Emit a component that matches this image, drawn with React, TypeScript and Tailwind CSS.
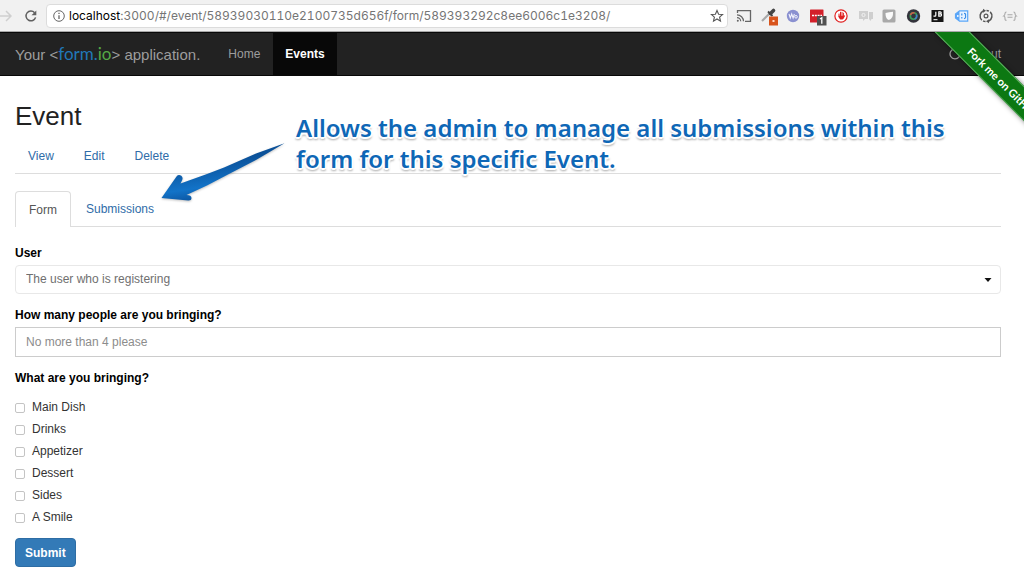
import { useState } from "react";
import type { ReactNode } from "react";

const URL_PATH = ":3000/#/event/58939030110e2100735d656f/form/589393292c8ee6006c1e3208/";

const DISHES = ["Main Dish", "Drinks", "Appetizer", "Dessert", "Sides", "A Smile"];

function ToolButton({ label, children }: { label: string; children: ReactNode }) {
  return (
    <button type="button" aria-label={label} className="flex h-5 w-4 items-center justify-center">
      <svg viewBox="0 0 16 16" className="h-4 w-4 overflow-visible" fill="none">
        {children}
      </svg>
    </button>
  );
}

function BrowserBar() {
  return (
    <div className="flex h-8 items-center border-b border-[#a8a8a8] bg-[#f1f1f1] pr-[6px]">
      <button type="button" aria-label="Forward" className="w-3">
        <svg viewBox="0 0 12 16" className="h-4 w-3" fill="none" stroke="#cfcfcf" strokeWidth="1.5">
          <path d="M0 8h11M6 3l5 5-5 5" />
        </svg>
      </button>
      <button type="button" aria-label="Reload" className="ml-3 w-[14px]">
        <svg viewBox="0 0 14 14" className="h-[14px] w-[14px]" fill="none" stroke="#606060" strokeWidth="1.5">
          <path d="M11.6 8.4A4.900 4.900 0 1 1 10.600 3.700" />
          <path d="M12.3 1.400v4.800H7.500z" fill="#606060" stroke="none" />
        </svg>
      </button>
      <div className="ml-2 flex h-6 flex-1 items-center rounded border border-[#dcdcdc] bg-white pl-[6px] pr-1">
        <svg viewBox="0 0 12 12" className="mr-1 h-3 w-3 shrink-0" fill="none" stroke="#666">
          <circle cx="6" cy="6" r="5.3" />
          <path d="M6 5.2V9M6 2.8v1.3" strokeWidth="1.3" />
        </svg>
        <div className="flex-1 font-['Inter',sans-serif] text-[12px] leading-4 whitespace-nowrap text-[#757575] tabular-nums">
          <span className="text-black">localhost</span>
          {URL_PATH}
        </div>
        <button type="button" aria-label="Bookmark" className="h-3 w-3">
          <svg viewBox="0 0 12 12" className="h-3 w-3 overflow-visible" fill="none" stroke="#555" strokeWidth="1.100">
            <path d="M6 0.500l1.600 3.700 4 .3-3 2.700.9 3.900L6 9 2.500 11.100l.9-3.900-3-2.700 4-.3z" />
          </svg>
        </button>
      </div>
      <div className="ml-[10px] flex gap-[8px]">
        <ToolButton label="Cast">
          <g transform="translate(-2 0)">
            <path d="M1.500 5V2.700h13v10.600H9" stroke="#666" strokeWidth="1.300" />
            <path d="M1 6.800a6.500 6.500 0 0 1 6.500 6.500M1 9.600a3.700 3.700 0 0 1 3.700 3.700" stroke="#666" strokeWidth="1.200" />
            <circle cx="1.800" cy="12.800" r="1" fill="#666" />
          </g>
        </ToolButton>
        <ToolButton label="Color picker">
          <path d="M0 13l7.500-7.500" stroke="#a8a8a8" strokeWidth="2.200" />
          <path d="M6 3.500l4.500 4.500" stroke="#444" strokeWidth="1.800" />
          <path d="M8.500 5.500l3-3" stroke="#444" strokeWidth="3.600" strokeLinecap="round" />
          <rect x="7" y="8.500" width="9" height="9" fill="#d8541c" />
          <rect x="10.500" y="12" width="2" height="2" fill="#ffd9c8" />
        </ToolButton>
        <ToolButton label="Web assistant">
          <circle cx="7" cy="8" r="6.200" fill="#8a90d0" />
          <path d="M3 6l1.300 4 1.400-4 1.400 4L8.400 6" stroke="#f0f1fc" strokeWidth="1.100" />
          <circle cx="10" cy="8.800" r="1.300" stroke="#f0f1fc" />
        </ToolButton>
        <ToolButton label="Notifications, 1">
          <rect x="0" y="1.500" width="13.500" height="13" rx="0.500" fill="#d3202a" />
          <path d="M2 7.500h10" stroke="#fff" strokeWidth="1.600" strokeDasharray="2 0.800" />
          <rect x="7" y="8" width="9.500" height="9.500" fill="#505050" />
          <path d="M10 11l1.800-1.200v6" stroke="#fff" strokeWidth="1.300" />
        </ToolButton>
        <ToolButton label="Ad blocker">
          <circle cx="7" cy="8" r="6.100" fill="#fff" stroke="#e02020" strokeWidth="1.200" />
          <path d="M5 8.500V6M6.500 8.500V4.200M8 8.500V4.200M9.400 8.500V5.200" stroke="#e02020" strokeWidth="1" strokeLinecap="round" />
          <path d="M4.500 7.800h5.400l1-.6.3.6-1.700 3-1 .8H6.300L4.800 9.800z" fill="#e02020" />
        </ToolButton>
        <ToolButton label="Chat">
          <path d="M1 3h9v8H7l-2 2v-2H1zM11 4h4v7h-1.500l-1 2-1.500-2z" fill="#cfcfcf" />
          <circle cx="5.500" cy="7" r="1.600" stroke="#f1f1f1" />
        </ToolButton>
        <ToolButton label="Leaf">
          <rect x="0.500" y="1.500" width="13" height="13" rx="1.500" fill="#a9a9a9" />
          <path d="M3.500 5Q7 4 11 3.800Q11.500 11 6.800 12Q3.500 11 3.500 5z" fill="#fafafa" />
        </ToolButton>
        <ToolButton label="Camera">
          <circle cx="7.500" cy="8" r="6.700" fill="#34343c" />
          <circle cx="7.500" cy="8" r="3.200" stroke="#3c9e58" strokeWidth="1.600" />
          <path d="M4.500 7a3.200 3.200 0 0 1 4-2" stroke="#d35a4a" strokeWidth="1.600" />
          <path d="M10.500 6.800a3.200 3.200 0 0 1-1.800 4.200" stroke="#427dd3" strokeWidth="1.600" />
        </ToolButton>
        <ToolButton label="JetBrains">
          <rect x="1.500" y="2" width="12" height="12" fill="#151515" />
          <path d="M5.800 3.800v3.400q0 .9-.9.900H3.500M8.800 3.800v4.300h1.700q1 0 1-1.100t-1.100-1.100H8.800M10.200 5.900q1 0 1-1.050t-1-1.050H8.300" stroke="#fff" strokeWidth="1.200" />
          <path d="M3.500 11.700h4" stroke="#fff" />
        </ToolButton>
        <ToolButton label="Tag">
          <path d="M5.500 2.800h8.200v10.400H5.500L1.500 10V6z" fill="#e9f3ff" stroke="#5aa6f8" strokeWidth="1.200" />
          <path d="M5.500 2.800v10.400L1.500 10V6z" fill="#5aa6f8" />
          <path d="M7.800 5.500v2M7.800 9v1.500M10 5.300q2 0 1.500 2.200q.6 3-1.500 3.200" stroke="#3b8ee8" strokeWidth="1.200" />
          <circle cx="3.800" cy="8" r="0.900" fill="#fff" />
        </ToolButton>
        <ToolButton label="Sync">
          <path d="M5.500 2.800a5.700 5.700 0 0 0-1.700 9.300M10.500 13.200a5.700 5.700 0 0 0 1.700-9.300M8.500 2.400q1.300 0 2.400.7M7.500 13.600q-1.300 0-2.400-.7" stroke="#555" strokeWidth="1.500" />
          <path d="M5 .8v4L8 2.800zM11 15.200v-4L8 13.200z" fill="#555" />
          <circle cx="8" cy="8" r="1.900" stroke="#555" strokeWidth="1.200" />
        </ToolButton>
        <ToolButton label="Brackets">
          <path d="M4.500 4Q3 4 3 5.500T1.800 8Q3 8 3 10.500T4.500 12M11.500 4Q13 4 13 5.500T14.200 8Q13 8 13 10.500T11.500 12M5.500 6.800h5M5.500 9.200h5" stroke="#a8a8a8" strokeWidth="1.100" />
        </ToolButton>
      </div>
    </div>
  );
}

function NavBar() {
  return (
    <nav className="relative flex h-11 items-stretch overflow-hidden border-y border-[#080808] bg-[#222] pl-[15px] text-[12px] text-[#9d9d9d]">
      <a href="#/" className="flex items-center text-[15px] whitespace-nowrap">
        <span>
          Your &lt;<span className="font-['Lato',sans-serif] text-[17px] text-[#2178b8]">form.</span>
          <span className="font-['Lato',sans-serif] text-[17px] text-[#55a946]">io</span>&gt; application.
        </span>
      </a>
      <a href="#/home" className="ml-[15px] flex items-center px-[13px]">Home</a>
      <a href="#/event" aria-current="page" className="flex items-center bg-[#080808] px-3 font-bold text-white">Events</a>
      <a href="#/logout" className="mr-[23px] ml-auto flex items-center gap-[3px]">
        <svg viewBox="0 0 12 12" className="h-3 w-3" fill="none" stroke="currentColor" strokeWidth="1.300">
          <path d="M5.300 1a5 5 0 1 0 2 0.100" />
        </svg>
        Logout
      </a>
    </nav>
  );
}

function Ribbon() {
  return (
    <div className="pointer-events-none absolute top-8 right-0 h-[100px] w-[90px] overflow-hidden">
      <a
        href="https://github.com/formio"
        className="pointer-events-auto absolute -top-6 left-3 flex h-[25px] w-[180px] origin-top-left rotate-45 items-center border-y border-[#5fae62] bg-[#0c7812] pl-[46px] font-['Liberation_Sans_Narrow','Lato',sans-serif] text-[11px] font-bold whitespace-nowrap text-white shadow-[0_0_5px_rgba(0,0,0,0.5)]"
      >
        Fork me on GitHub
      </a>
    </div>
  );
}

function Callout() {
  return (
    <div className="pointer-events-none absolute top-[112px] left-[160px] flex">
      <svg viewBox="0 0 126 92" className="h-[92px] w-[126px] shrink-0 drop-shadow-[0_1px_1px_rgba(0,0,0,0.25)]">
        <defs>
          <linearGradient id="arrow" x1="0" y1="0" x2="0.3" y2="1">
            <stop offset="0.4" stopColor="#0b5199" />
            <stop offset="0.8" stopColor="#1273c8" />
            <stop offset="1" stopColor="#0c55a0" />
          </linearGradient>
        </defs>
        <path
          d="M124.500 31.200L96 48L68 62.500L47 73.500L26.500 83Q31.500 83 31.500 86Q31.500 88.800 28 88.500L1.500 86L16.500 64.500Q18.500 62 21.300 63.800Q23.500 65.500 22 68.500L20.500 71.500L47 62L64 55.500L96 41.500Z"
          fill="url(#arrow)"
        />
      </svg>
      <p className="ml-[10px] w-[670px] font-['Noto_Sans',sans-serif] text-[24px] leading-[31px] font-semibold text-[#0e67b6] [text-shadow:-1px_-1px_1px_#fff,1px_-1px_1px_#fff,-2px_1px_1px_#fff,2px_1px_1px_#fff,0_2px_0_#fff,1px_3px_2px_#bbb,-1px_3px_2px_#ccc]">
        Allows the admin to manage all submissions within this form for this specific Event.
      </p>
    </div>
  );
}

function EventForm() {
  const [checked, setChecked] = useState<string[]>([]);
  const toggle = (dish: string) =>
    setChecked((now) => (now.includes(dish) ? now.filter((d) => d !== dish) : [...now, dish]));

  return (
    <form className="pt-4" onSubmit={(e) => e.preventDefault()}>
      <label htmlFor="user" className="block font-bold text-black">User</label>
      <div className="relative mt-[2px]">
        <select
          id="user"
          defaultValue=""
          className="block h-[29px] w-full appearance-none rounded border border-[#e8e8e8] bg-white pr-6 pb-[2px] pl-[10px] text-[#6f6f6f]"
        >
          <option value="">The user who is registering</option>
        </select>
        <svg viewBox="0 0 8 4" className="pointer-events-none absolute top-[13px] right-[9px] h-1 w-2" fill="#111">
          <path d="M0.500 0h7L4 4z" />
        </svg>
      </div>
      <label htmlFor="people" className="mt-[11px] block font-bold text-black">How many people are you bringing?</label>
      <input
        id="people"
        type="text"
        placeholder="No more than 4 please"
        className="mt-[2px] block h-[30px] w-full border border-[#ccc] bg-white px-[10px] placeholder:text-[#8c8c8c]"
      />
      <fieldset className="mt-[11px]">
        <legend className="font-bold text-black">What are you bringing?</legend>
        <div className="mt-[9px] flex flex-col gap-[2px]">
          {DISHES.map((dish) => (
            <label key={dish} className="flex h-5 items-center gap-[7px]">
              <input
                type="checkbox"
                checked={checked.includes(dish)}
                onChange={() => toggle(dish)}
                className="mt-[2px] h-[10px] w-[10px] appearance-none rounded-[2px] border border-[#c4c4c4] bg-white checked:bg-[#337ab7]"
              />
              {dish}
            </label>
          ))}
        </div>
      </fieldset>
      <button
        type="submit"
        className="mt-[11px] h-[29px] rounded border border-[#2e6da4] bg-[#337ab7] px-[9px] font-bold text-white"
      >
        Submit
      </button>
    </form>
  );
}

export default function App() {
  return (
    <div className="relative min-h-screen overflow-hidden bg-white font-['Liberation_Sans',sans-serif] text-[12px] leading-5 text-[#333]">
      <BrowserBar />
      <NavBar />
      <main className="pr-[23px] pl-[15px]">
        <h1 className="pt-6 text-[26px] leading-8 text-[#222]">Event</h1>
        <nav className="flex h-[42px] items-end border-b border-[#ddd] pb-[7px] text-[#2f6ca8]">
          <a href="#/view" className="px-[13px]">View</a>
          <a href="#/edit" className="ml-1 px-[13px]">Edit</a>
          <a href="#/delete" className="ml-1 px-[13px]">Delete</a>
        </nav>
        <nav className="mt-[17px] flex h-9 items-stretch border-b border-[#ddd] text-[#2f6ca8]">
          <a href="#/form" aria-current="page" className="-mb-px flex items-center rounded-t border border-b-0 border-[#ddd] bg-white px-[13px] text-[#555]">
            Form
          </a>
          <a href="#/submissions" className="ml-[2px] flex items-center px-[13px]">Submissions</a>
        </nav>
        <EventForm />
      </main>
      <Callout />
      <Ribbon />
    </div>
  );
}
